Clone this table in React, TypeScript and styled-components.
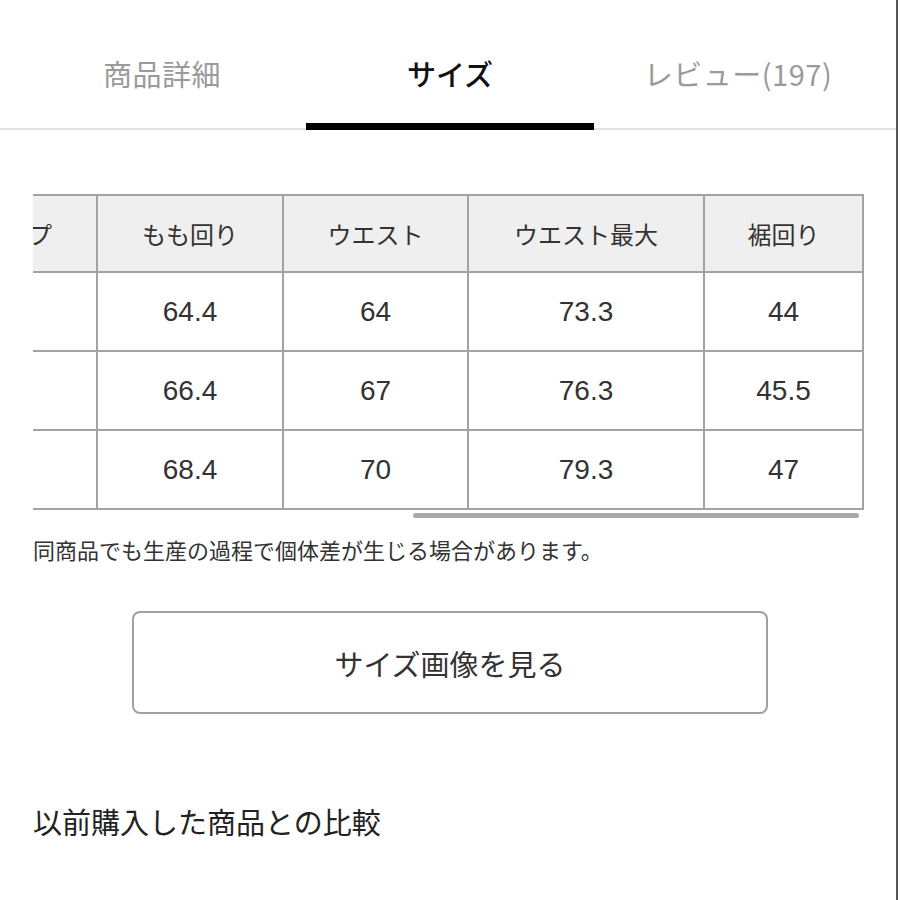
import React, { useLayoutEffect, useRef, useState } from "react";
import styled, { createGlobalStyle } from "styled-components";

const GlobalStyle = createGlobalStyle`
  html, body { margin: 0; padding: 0; background: #fff; }
  body { font-family: "Noto Sans CJK JP", "Noto Sans", sans-serif; color: #333; }
`;

const Page = styled.div`
  width: 896px;
  min-height: 900px;
  border-right: 2px solid #555;
  background: #fff;
  overflow: hidden;
`;

const TabBar = styled.nav`
  display: grid;
  grid-template-columns: repeat(3, 288px);
  padding: 0 18px;
  border-bottom: 2px solid #e2e2e2;
`;

const Tab = styled.div<{ $active?: boolean }>`
  position: relative;
  height: 128px;
  box-sizing: border-box;
  padding-top: 53px;
  text-align: center;
  font-size: 29px;
  line-height: 40px;
  letter-spacing: ${(p) => (p.$active ? "0" : "0.5px")};
  font-weight: ${(p) => (p.$active ? 500 : 400)};
  color: ${(p) => (p.$active ? "#111" : "#9a9a9a")};
  &::after {
    content: "";
    display: ${(p) => (p.$active ? "block" : "none")};
    position: absolute;
    left: 0;
    right: 0;
    bottom: -2px;
    height: 7px;
    background: #000;
  }
`;

const Section = styled.section`
  padding: 64px 32px 0 33px;
`;

const Scroller = styled.div`
  overflow-x: auto;
  scrollbar-width: none;
  &::-webkit-scrollbar { display: none; }
`;

const Table = styled.table`
  border-collapse: collapse;
  table-layout: fixed;
  width: 1545px;
`;

const HeadCell = styled.th`
  height: 75px;
  padding: 0;
  background: #efefef;
  border: 2px solid #a3a3a3;
  font-size: 24px;
  font-weight: 400;
  color: #333;
  text-align: center;
  vertical-align: middle;
`;

const Cell = styled.td`
  height: 77px;
  padding: 0;
  border: 2px solid #a3a3a3;
  font-family: "Liberation Sans", "Noto Sans CJK JP", sans-serif;
  font-size: 28px;
  color: #333;
  text-align: center;
  vertical-align: middle;
`;

const Track = styled.div`
  height: 5px;
  margin-top: 3px;
`;

const Thumb = styled.div`
  height: 5px;
  border-radius: 3px;
  background: #a9a9a9;
`;

const Note = styled.p`
  margin: 15px 0 0;
  font-size: 22px;
  line-height: 32px;
  color: #333;
`;

const ButtonRow = styled.div`
  display: flex;
  justify-content: center;
  margin-top: 46px;
  padding-left: 3px;
`;

const OutlineButton = styled.button`
  width: 636px;
  height: 103px;
  box-sizing: border-box;
  border: 2px solid #a0a0a0;
  border-radius: 8px;
  background: #fff;
  font-family: "Noto Sans CJK JP", sans-serif;
  font-size: 29px;
  color: #333;
  cursor: pointer;
`;

const Heading = styled.h2`
  margin: 87px 0 0;
  font-size: 29px;
  line-height: 40px;
  font-weight: 400;
  color: #222;
`;

const columns: [string, number][] = [
  ["サイズ", 125],
  ["着丈", 164],
  ["股上", 164],
  ["股下", 164],
  ["ヒップ", 162],
  ["もも回り", 186],
  ["ウエスト", 185],
  ["ウエスト最大", 236],
  ["裾回り", 159],
];

const rows: string[][] = [
  ["S", "95", "27", "70", "90", "64.4", "64", "73.3", "44"],
  ["M", "96", "28", "70", "92", "66.4", "67", "76.3", "45.5"],
  ["L", "97", "29", "70", "94", "68.4", "70", "79.3", "47"],
];

export default function App() {
  const ref = useRef<HTMLDivElement>(null);
  const [thumb, setThumb] = useState({ left: 379, width: 447 });

  useLayoutEffect(() => {
    const el = ref.current;
    if (!el) return;
    el.scrollLeft = el.scrollWidth - el.clientWidth;
    const w = el.clientWidth;
    const total = el.scrollWidth;
    const width = (w * w) / total;
    const left = (el.scrollLeft / total) * w - 5;
    setThumb({ left, width });
  }, []);

  return (
    <Page>
      <GlobalStyle />
      <TabBar>
        <Tab>商品詳細</Tab>
        <Tab $active>サイズ</Tab>
        <Tab>レビュー(197)</Tab>
      </TabBar>
      <Section>
        <Scroller ref={ref}>
          <Table>
            <colgroup>
              {columns.map(([name, w]) => (
                <col key={name} style={{ width: w }} />
              ))}
            </colgroup>
            <thead>
              <tr>
                {columns.map(([name]) => (
                  <HeadCell key={name}>{name}</HeadCell>
                ))}
              </tr>
            </thead>
            <tbody>
              {rows.map((r) => (
                <tr key={r[0]}>
                  {r.map((v, i) => (
                    <Cell key={i}>{v}</Cell>
                  ))}
                </tr>
              ))}
            </tbody>
          </Table>
        </Scroller>
        <Track>
          <Thumb style={{ marginLeft: thumb.left, width: thumb.width }} />
        </Track>
        <Note>同商品でも生産の過程で個体差が生じる場合があります。</Note>
        <ButtonRow>
          <OutlineButton type="button">サイズ画像を見る</OutlineButton>
        </ButtonRow>
        <Heading>以前購入した商品との比較</Heading>
      </Section>
    </Page>
  );
}
